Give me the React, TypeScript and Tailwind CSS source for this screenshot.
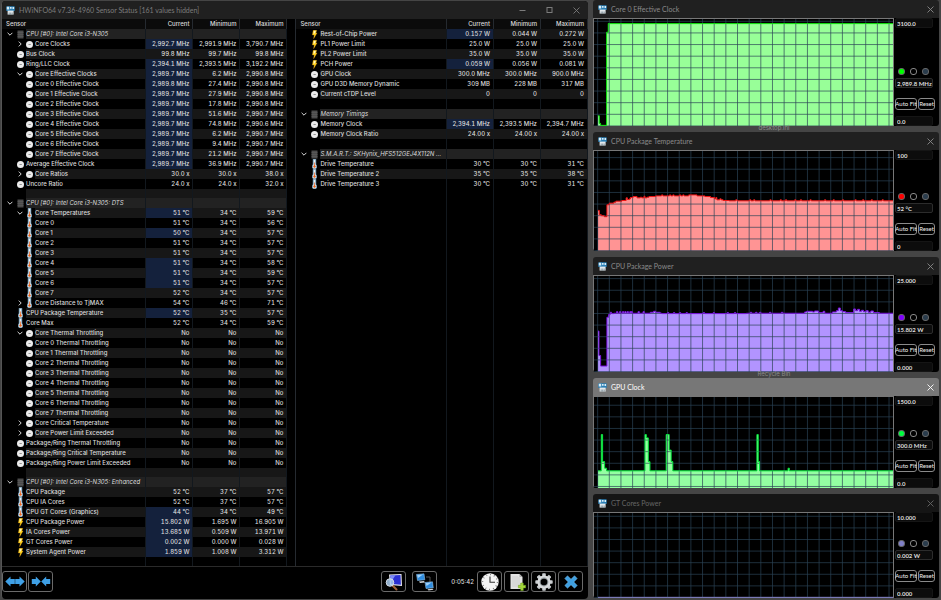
import type { ReactNode } from "react";
import { clsx } from "clsx";

type IconKind = "chip" | "clock" | "temp" | "power";

interface SensorRow {
  kind: "group" | "item" | "nested" | "gap";
  icon?: IconKind;
  label?: string;
  values?: [string, string, string];
  hot?: boolean;
  toggle?: "open" | "closed";
}

const GAP: SensorRow = { kind: "gap" };

const group = (label: string): SensorRow => ({
  kind: "group",
  icon: "chip",
  label,
  toggle: "open",
});

const item = (
  icon: IconKind,
  label: string,
  values: [string, string, string],
  hot = false,
): SensorRow => ({ kind: "item", icon, label, values, hot });

const nested = (
  icon: IconKind,
  label: string,
  values: [string, string, string],
  hot = false,
  toggle?: "open" | "closed",
): SensorRow => ({ kind: "nested", icon, label, values, hot, toggle });

const NO: [string, string, string] = ["No", "No", "No"];

const coreClocks: [string, string, string][] = [
  ["2,989.8 MHz", "27.4 MHz", "2,990.8 MHz"],
  ["2,989.7 MHz", "27.9 MHz", "2,990.8 MHz"],
  ["2,989.7 MHz", "17.8 MHz", "2,990.8 MHz"],
  ["2,989.7 MHz", "51.6 MHz", "2,990.7 MHz"],
  ["2,989.7 MHz", "74.8 MHz", "2,990.6 MHz"],
  ["2,989.7 MHz", "6.2 MHz", "2,990.7 MHz"],
  ["2,989.7 MHz", "9.4 MHz", "2,990.7 MHz"],
  ["2,989.7 MHz", "21.2 MHz", "2,990.7 MHz"],
];

const coreTemps: [number, number, number, boolean][] = [
  [51, 34, 56, false],
  [50, 34, 57, true],
  [51, 34, 57, false],
  [51, 34, 57, false],
  [51, 34, 58, true],
  [51, 34, 59, true],
  [51, 34, 57, true],
  [52, 34, 57, false],
];

const leftRows: SensorRow[] = [
  group("CPU [#0]: Intel Core i3-N305"),
  nested("clock", "Core Clocks", ["2,992.7 MHz", "2,991.9 MHz", "3,790.7 MHz"], true, "closed"),
  item("clock", "Bus Clock", ["99.8 MHz", "99.7 MHz", "99.8 MHz"]),
  item("clock", "Ring/LLC Clock", ["2,394.1 MHz", "2,393.5 MHz", "3,192.2 MHz"], true),
  nested("clock", "Core Effective Clocks", ["2,989.7 MHz", "6.2 MHz", "2,990.8 MHz"], true, "open"),
  ...coreClocks.map((v, i) => nested("clock", `Core ${i} Effective Clock`, v, true)),
  item("clock", "Average Effective Clock", ["2,989.7 MHz", "36.9 MHz", "2,990.7 MHz"], true),
  nested("clock", "Core Ratios", ["30.0 x", "30.0 x", "38.0 x"], false, "closed"),
  item("clock", "Uncore Ratio", ["24.0 x", "24.0 x", "32.0 x"]),
  GAP,
  group("CPU [#0]: Intel Core i3-N305: DTS"),
  nested("temp", "Core Temperatures", ["51 °C", "34 °C", "59 °C"], true, "open"),
  ...coreTemps.map(([cur, min, max, hot], i) =>
    nested("temp", `Core ${i}`, [`${cur} °C`, `${min} °C`, `${max} °C`], hot),
  ),
  nested("temp", "Core Distance to TjMAX", ["54 °C", "46 °C", "71 °C"], false, "closed"),
  item("temp", "CPU Package Temperature", ["52 °C", "35 °C", "57 °C"], true),
  item("temp", "Core Max", ["52 °C", "34 °C", "59 °C"]),
  nested("clock", "Core Thermal Throttling", NO, false, "open"),
  ...[0, 1, 2, 3, 4, 5, 6, 7].map((i) => nested("clock", `Core ${i} Thermal Throttling`, NO)),
  nested("clock", "Core Critical Temperature", NO, false, "closed"),
  nested("clock", "Core Power Limit Exceeded", NO, false, "closed"),
  item("clock", "Package/Ring Thermal Throttling", NO),
  item("clock", "Package/Ring Critical Temperature", NO),
  item("clock", "Package/Ring Power Limit Exceeded", NO),
  GAP,
  group("CPU [#0]: Intel Core i3-N305: Enhanced"),
  item("temp", "CPU Package", ["52 °C", "37 °C", "57 °C"]),
  item("temp", "CPU IA Cores", ["52 °C", "37 °C", "57 °C"]),
  item("temp", "CPU GT Cores (Graphics)", ["44 °C", "34 °C", "49 °C"], true),
  item("power", "CPU Package Power", ["15.802 W", "1.695 W", "16.905 W"], true),
  item("power", "IA Cores Power", ["13.685 W", "0.509 W", "13.971 W"], true),
  item("power", "GT Cores Power", ["0.002 W", "0.000 W", "0.028 W"], true),
  item("power", "System Agent Power", ["1.859 W", "1.008 W", "3.312 W"], true),
];

const rightRows: SensorRow[] = [
  item("power", "Rest-of-Chip Power", ["0.157 W", "0.044 W", "0.272 W"], true),
  item("power", "PL1 Power Limit", ["25.0 W", "25.0 W", "25.0 W"]),
  item("power", "PL2 Power Limit", ["35.0 W", "35.0 W", "35.0 W"]),
  item("power", "PCH Power", ["0.059 W", "0.056 W", "0.081 W"], true),
  item("clock", "GPU Clock", ["300.0 MHz", "300.0 MHz", "900.0 MHz"]),
  item("clock", "GPU D3D Memory Dynamic", ["309 MB", "228 MB", "317 MB"]),
  item("clock", "Current cTDP Level", ["0", "0", "0"]),
  GAP,
  group("Memory Timings"),
  item("clock", "Memory Clock", ["2,394.1 MHz", "2,393.5 MHz", "2,394.7 MHz"], true),
  item("clock", "Memory Clock Ratio", ["24.00 x", "24.00 x", "24.00 x"]),
  GAP,
  group("S.M.A.R.T.: SKHynix_HFS512GEJ4X112N ..."),
  item("temp", "Drive Temperature", ["30 °C", "30 °C", "31 °C"]),
  item("temp", "Drive Temperature 2", ["35 °C", "35 °C", "38 °C"]),
  item("temp", "Drive Temperature 3", ["30 °C", "30 °C", "31 °C"]),
];

function SensorIcon({ kind }: { kind: IconKind }) {
  if (kind === "chip") {
    return (
      <svg viewBox="0 0 7 9" className="h-[9px] w-[7px]">
        <rect x="0.5" y="0.500" width="6" height="8" fill="#4b4b4b" />
        <path d="M0.500 2.500h6M0.500 4.500h6M0.500 6.500h6" stroke="#5e5e5e" strokeWidth="0.600" />
      </svg>
    );
  }
  if (kind === "temp") {
    return (
      <svg viewBox="0 0 7 10" className="h-[10px] w-[7px]">
        <path d="M2.200 0.200h2.600v5l.7 1.400v2.400l-1 .8h-2l-1-.8V6.600l.7-1.400z" fill="#e6f1f8" stroke="#7fb0d2" strokeWidth="0.700" />
        <rect x="3" y="3.500" width="1" height="3.500" fill="#e88a5a" />
        <circle cx="3.500" cy="7.500" r="1.200" fill="#e8641c" />
      </svg>
    );
  }
  if (kind === "power") {
    return (
      <svg viewBox="0 0 7 9" className="h-[9px] w-[7px]">
        <path d="M2.200 0.200h3.600L4.900 3h1.200L2.600 8.800 3.200 5H1.300z" fill="#ffd21e" stroke="#c98a12" strokeWidth="0.300" />
        <path d="M2.800 0.800h2L3.900 3.200 2.600 4z" fill="#fff6c2" />
      </svg>
    );
  }
  return (
    <svg viewBox="0 0 7 7" className="size-[7px]">
      <circle cx="3.500" cy="3.500" r="3.500" fill="#ececec" />
      <path d="M2.500 3.500H4.800" stroke="#8a8a8a" strokeWidth="0.900" fill="none" />
    </svg>
  );
}

function Toggle({ state, label }: { state: "open" | "closed"; label: string }) {
  return (
    <button type="button" aria-label={label} aria-expanded={state === "open"} className="flex">
      <svg viewBox="0 0 6 6" className="size-[6px]" fill="none" stroke="#d8d8d8">
        <path d={state === "open" ? "M0.600 1.800 3 4.200 5.400 1.800" : "M1.800 0.600 4.200 3 1.800 5.400"} />
      </svg>
    </button>
  );
}

interface SensorTableProps {
  rows: SensorRow[];
  label: string;
  tightGaps?: boolean;
}

function SensorTable({ rows, label, tightGaps }: SensorTableProps) {
  return (
    <table
      aria-label={label}
      className="h-full w-full table-fixed border-collapse font-medium text-[#dcdcdc]"
    >
      <thead>
        <tr className="h-[10px] bg-[#0b0b0b]">
          <th className="border-r border-[#252a30] p-0 pl-1 text-left font-medium">Sensor</th>
          {["Current", "Minimum", "Maximum"].map((h) => (
            <th key={h} className="w-[47px] border-r border-[#252a30] p-0 pr-[3px] text-right font-medium">
              {h}
            </th>
          ))}
        </tr>
      </thead>
      <tbody>
        {rows.map((row, i) => {
          const shade =
            row.kind === "group" ? "bg-[#222222]" : i % 2 === 0 ? "bg-[#171717]" : "bg-black";
          const height = row.kind === "gap" && tightGaps ? "h-[9px]" : "h-[10px]";
          return (
            <tr key={i} className={height}>
              <td className="border-r border-[#12181e] p-0">
                <div className={clsx("flex items-center", height)}>
                  <span className="flex w-[15px] shrink-0 justify-center">
                    {row.kind === "group" && <Toggle state="open" label={row.label ?? ""} />}
                  </span>
                  <span className="flex w-[9px] shrink-0">
                    {row.kind === "nested"
                      ? row.toggle && <Toggle state={row.toggle} label={row.label ?? ""} />
                      : row.icon && <SensorIcon kind={row.icon} />}
                  </span>
                  {row.kind === "nested" && row.icon && (
                    <span className="flex w-[9px] shrink-0">
                      <SensorIcon kind={row.icon} />
                    </span>
                  )}
                  <span
                    className={clsx(
                      "h-full min-w-0 flex-1 whitespace-nowrap",
                      row.kind === "group" && "font-normal italic",
                      shade,
                    )}
                  >
                    {row.label}
                  </span>
                </div>
              </td>
              {[0, 1, 2].map((c) => (
                <td
                  key={c}
                  className={clsx(
                    "border-r border-[#12181e] p-0 pr-[3px] text-right whitespace-nowrap tabular-nums",
                    c === 0 && row.hot ? "bg-[#14213c]" : shade,
                  )}
                >
                  {row.values?.[c]}
                </td>
              ))}
            </tr>
          );
        })}
        <tr>
          {[0, 1, 2, 3].map((c) => (
            <td key={c} className="border-r border-[#12181e] p-0">
              <div className="h-[9px]" />
            </td>
          ))}
        </tr>
      </tbody>
    </table>
  );
}

function AppIcon() {
  return (
    <svg viewBox="0 0 9 9" className="size-[9px] shrink-0">
      <rect x="0.300" y="0.300" width="8.400" height="4.700" rx="0.600" fill="#2a7fb5" />
      <path d="M0.800 0.800h2.400v2.700H0.800zM4 0.900h1.600v1.800H4zM6.500 0.900h1.600v2.200H6.500z" fill="#d9edf7" />
      <rect x="1.600" y="4.600" width="6" height="4" fill="#e4e9ec" />
      <path d="M3.200 6.500v2.100M4.700 6.500v2.100M6.200 6.500v2.100" stroke="#4f6672" strokeWidth="0.600" />
    </svg>
  );
}

function CloseIcon() {
  return (
    <svg viewBox="0 0 7 7" className="size-[7px]" fill="none" stroke="currentColor" strokeWidth="0.900">
      <path d="M0.500 0.500l6 6M6.500 0.500l-6 6" />
    </svg>
  );
}

// Graph samples are [x, level] steps: x runs over 903 units, level counts up
// from the bottom edge in the same unit.
type Sample = [number, number];

interface Graph {
  title: string;
  max: string;
  min: string;
  value: string;
  height: string;
  units: number;
  gridTop: number;
  line: string;
  fill: string;
  swatch: string;
  samples: Sample[];
  tone: "idle" | "active" | "faded";
  below?: string;
}

// Small regular bumps on top of a flat level
function ripple(from: number, to: number, level: number, bumps: number[], height = 3): Sample[] {
  const out: Sample[] = [[from, level]];
  for (const b of bumps) {
    if (b > from && b < to) out.push([b, level + height], [b + 4, level]);
  }
  return out;
}

const graphs: Graph[] = [
  {
    title: "Core 0 Effective Clock",
    max: "3100.0",
    min: "0.0",
    value: "2,989.8 MHz",
    height: "h-[108px]",
    units: 324,
    gridTop: 7,
    line: "#0be00b",
    fill: "#98ff98",
    swatch: "bg-[#00ff00]",
    samples: [[12, 31], [16, 8], [20, 2], [38, 284], [43, 310]],
    tone: "idle",
    below: "desktop.ini",
  },
  {
    title: "CPU Package Temperature",
    max: "100",
    min: "0",
    value: "52 °C",
    height: "h-[101px]",
    units: 303,
    gridTop: 20,
    line: "#f01414",
    fill: "#ff9494",
    swatch: "bg-[#ff0000]",
    samples: [
      [12, 123], [16, 110], [22, 107], [31, 104], [39, 140], [46, 145], [60, 148], [66, 151],
      [84, 153], [97, 161], [101, 156], [107, 158], [110, 162], [118, 165], [130, 161],
      [140, 163], [144, 161], [151, 166], [154, 161], [160, 163], [166, 165],
      ...ripple(186, 284, 167, [204, 228, 238, 258, 268]),
      [286, 170], [311, 167], [335, 165], [352, 162], [364, 158], [368, 162], [371, 155],
      [380, 158], [384, 155], [390, 153],
      ...ripple(408, 894, 152, [428, 470, 482, 531, 562, 578, 606, 623, 652, 696, 722, 750, 788, 811, 837, 870, 898]),
    ],
    tone: "idle",
  },
  {
    title: "CPU Package Power",
    max: "25.000",
    min: "0.000",
    value: "15.802 W",
    height: "h-[97px]",
    units: 291,
    gridTop: 8,
    line: "#7a12e0",
    fill: "#b294ff",
    swatch: "bg-[#8000ff]",
    samples: [
      [12, 124], [15, 50], [20, 18], [39, 166], [44, 174], [49, 181], [53, 177],
      ...ripple(60, 165, 178, [68, 77, 86, 93, 100, 108, 112, 133, 148], 5),
      [170, 181], [180, 184], [186, 181], [200, 178],
      ...ripple(205, 450, 177, [222, 240, 258, 278, 330, 360, 402, 424]),
      ...ripple(460, 632, 178, [472, 488, 500, 530, 566]),
      [636, 182], [642, 184], [660, 182], [666, 185], [678, 180], [692, 184], [697, 178],
      [720, 182], [732, 186], [738, 194], [744, 186], [750, 183], [760, 180], [774, 180],
      [784, 191], [790, 186], [796, 190], [802, 184], [808, 187], [814, 183],
      [822, 186], [828, 181], [836, 185], [844, 180], [862, 178],
    ],
    tone: "idle",
    below: "Recycle Bin",
  },
  {
    title: "GPU Clock",
    max: "1500.0",
    min: "0.0",
    value: "300.0 MHz",
    height: "h-[92px]",
    units: 276,
    gridTop: 25,
    line: "#00e63a",
    fill: "#94ffa2",
    swatch: "bg-[#00ff40]",
    samples: [
      [12, 52], [22, 162], [26, 80], [32, 60], [38, 52],
      [154, 162], [158, 152], [164, 80], [169, 52],
      [218, 162], [227, 115], [233, 80], [238, 52],
      [492, 162], [496, 80], [500, 52], [586, 60], [590, 52],
    ],
    tone: "active",
  },
  {
    title: "GT Cores Power",
    max: "10.000",
    min: "0.000",
    value: "0.002 W",
    height: "h-[86px]",
    units: 258,
    gridTop: 10,
    line: "#8884c8",
    fill: "#8884c8",
    swatch: "bg-[#8080c8]",
    samples: [[12, 2]],
    tone: "faded",
  },
];

function Plot({ graph }: { graph: Graph }) {
  const { units, samples } = graph;
  let steps = `M${samples[0][0]} ${units - samples[0][1]}`;
  for (const [x, level] of samples.slice(1)) {
    steps += `H${x}V${units - level}`;
  }
  steps += "H903";

  let grid = "";
  for (let x = 11; x < 903; x += 35.2) grid += `M${x} 0V${units}`;
  for (let y = graph.gridTop; y < units; y += 35.2) grid += `M0 ${y}H903`;

  return (
    <svg
      viewBox={`0 0 903 ${units}`}
      preserveAspectRatio="none"
      className="min-w-0 flex-1 border-t border-r border-l border-[#777] bg-black"
      role="img"
      aria-label={graph.title}
    >
      <path d={`${steps}V${units}H${samples[0][0]}Z`} fill={graph.fill} />
      <path d={grid} fill="none" stroke="#2a4355" strokeOpacity="0.700" strokeWidth="3" />
      <path d={steps} fill="none" stroke={graph.line} strokeWidth="3" />
    </svg>
  );
}

function Field({ label, value, outlined }: { label: string; value: string; outlined?: boolean }) {
  return (
    <input
      aria-label={label}
      defaultValue={value}
      className={clsx(
        "h-[10px] w-[38px] shrink-0 rounded-[2px] border bg-[#0c0c0c] pl-px leading-[8px]",
        outlined ? "border-[#2c2c2c]" : "border-[#151515]",
      )}
    />
  );
}

function GraphWindow({ graph }: { graph: Graph }) {
  return (
    <section className="overflow-hidden rounded-[3px]">
      <header
        className={clsx(
          "flex h-[18px] items-center gap-1 px-[5px] font-['Lato',sans-serif] text-[7px]",
          graph.tone === "idle" && "bg-[#202020] text-[#8a8a8a]",
          graph.tone === "active" && "bg-[#777777] text-white",
          graph.tone === "faded" && "bg-[#151515] text-[#666666]",
        )}
      >
        <AppIcon />
        <h2 className="flex-1">{graph.title}</h2>
        <button type="button" aria-label={`Close ${graph.title}`}>
          <CloseIcon />
        </button>
      </header>
      <div className={clsx("flex bg-black", graph.height)}>
        <Plot graph={graph} />
        <div className="flex w-[45px] shrink-0 flex-col pl-px font-['Lato',sans-serif] text-[6px] font-bold text-[#dcdcdc]">
          <Field label="Graph maximum" value={graph.max} />
          <div className="mt-auto flex gap-[5px] pl-[3px]">
            <button type="button" aria-label="Line colour" className={clsx("size-[7px] rounded-[3px] border border-[#666]", graph.swatch)} />
            <button type="button" aria-label="Background colour" className="size-[7px] rounded-[3px] border border-[#888] bg-black" />
            <button type="button" aria-label="Grid colour" className="size-[7px] rounded-[3px] border border-[#666] bg-[#2a3c4c]" />
          </div>
          <div className="mt-[3px] flex">
            <Field label="Current value" value={graph.value} outlined />
          </div>
          <div className="mt-[10px] mb-[6px] flex gap-px leading-[10px] font-normal text-[#f0f0f0]">
            <button type="button" className="flex h-3 w-[22px] justify-center rounded-[3px] border border-[#8a8a8a] whitespace-nowrap">
              Auto Fit
            </button>
            <button type="button" className="flex h-3 w-[17px] justify-center rounded-[3px] border border-[#8a8a8a]">
              Reset
            </button>
          </div>
          <Field label="Graph minimum" value={graph.min} />
        </div>
      </div>
    </section>
  );
}

function ToolButton({ label, children }: { label: string; children: ReactNode }) {
  return (
    <button
      type="button"
      aria-label={label}
      className="flex h-[21px] w-[25px] items-center justify-center rounded-[3px] border border-[#6a6a6a] bg-black"
    >
      {children}
    </button>
  );
}

function Toolbar() {
  return (
    <footer className="flex items-center border-t border-[#2a2a2a] pt-1 pr-[5px] pb-[7px]">
      <div className="flex gap-px">
        <ToolButton label="Expand columns">
          <svg viewBox="0 0 20 11" className="h-[11px] w-[20px] shrink-0" fill="#3fa0e6">
            <path d="M0.300 5.500 5.500 0.500v2.400h4.300v5.200H5.500v2.400zM19.700 5.500 14.500 0.500v2.400h-4.300v5.200h4.300v2.400z" />
          </svg>
        </ToolButton>
        <ToolButton label="Shrink columns">
          <svg viewBox="0 0 20 11" className="h-[11px] w-[20px] shrink-0" fill="#3fa0e6">
            <path d="M9.800 5.500 4.800 0.500v2.400H0.800v5.200h4v2.400zM10.200 5.500 15.200 0.500v2.400h4v5.200h-4v2.400z" />
          </svg>
        </ToolButton>
      </div>
      <div className="ml-auto flex items-center gap-[6px]">
        <ToolButton label="System summary">
          <svg viewBox="0 0 18 18" className="size-[18px]">
            <path d="M4 1.500 16.500 1l.5 12L5 12z" fill="#e8e8ee" />
            <path d="M5.200 2.500 15.500 2l.4 9.800L6 11z" fill="#2a2fd0" />
            <path d="M5.200 2.500 10.500 2.200 6 9z" fill="#7d8af5" />
            <path d="M7.500 12.500 11.500 16.500" stroke="#a06038" strokeWidth="2" strokeLinecap="round" />
            <circle cx="5" cy="9.500" r="3.800" fill="#a9cdf0" fillOpacity="0.850" stroke="#d5dde5" strokeWidth="1" />
          </svg>
        </ToolButton>
        <ToolButton label="Remote sensors">
          <svg viewBox="0 0 18 18" className="size-[18px]">
            <path d="M10 4h4v5" stroke="#555" fill="none" />
            <path d="M0.500 1.500 8 0.800l.8 6L1.500 7.500z" fill="#2f8de0" stroke="#a9d2f2" strokeWidth="0.500" />
            <path d="M3 8.500 8 8l1 1.500-5 .5z" fill="#d0d4d8" />
            <path d="M1.200 2 7 1.500 2 5z" fill="#9fd0f8" />
            <path d="M9 9.500l7.500-.700.8 6-7.300.700z" fill="#2f8de0" stroke="#a9d2f2" strokeWidth="0.500" />
            <path d="M11.500 16.300l5-.5 1 1-5 .7z" fill="#d0d4d8" />
            <path d="M9.700 10l5.800-.5-5 3.500z" fill="#9fd0f8" />
          </svg>
        </ToolButton>
      </div>
      <time className="mr-[3px] ml-[14px] font-medium whitespace-nowrap text-[#dcdcdc]">0:05:42</time>
      <div className="flex items-center gap-[2px]">
        <ToolButton label="Reset clock">
          <svg viewBox="0 0 18 18" className="size-[18px]">
            <circle cx="9" cy="9" r="8.700" fill="#f4f4f4" />
            <circle cx="9" cy="9" r="7.400" fill="none" stroke="#555" strokeWidth="1.400" strokeDasharray="0.700 3.174" />
            <path d="M9 3.500V9.200h5" stroke="#333" strokeWidth="1.100" fill="none" />
          </svg>
        </ToolButton>
        <ToolButton label="Start logging">
          <svg viewBox="0 0 18 18" className="size-[18px]">
            <path d="M2.500 1h9l3 3v12h-12z" fill="#e2e2e2" />
            <path d="M5 3v11M7 3v11M9 3v11M11 4v10" stroke="#c6c6c6" strokeWidth="0.700" />
            <path d="M11.500 1l3 3h-3z" fill="#aaa" />
            <path d="M12.700 10h2.600v2.300h2.300v2.600h-2.300v2.600h-2.600v-2.600h-2.300v-2.600h2.300z" fill="#a4d63c" stroke="#6d9c1c" strokeWidth="0.500" />
          </svg>
        </ToolButton>
        <ToolButton label="Settings">
          <svg viewBox="0 0 18 18" className="size-[18px]">
            {[0, 45, 90, 135].map((a) => (
              <rect key={a} x="7.200" y="0.300" width="3.600" height="17.400" rx="0.800" fill="#c9cdd0" transform={`rotate(${a} 9 9)`} />
            ))}
            <circle cx="9" cy="9" r="6.600" fill="#d9dcde" />
            <circle cx="9" cy="9" r="4.400" fill="#8d9498" />
            <circle cx="9" cy="9" r="3.300" fill="#000" />
          </svg>
        </ToolButton>
        <ToolButton label="Close sensors">
          <svg viewBox="0 0 14 14" className="size-[14px]">
            <path d="M3.500 0.800 7 4.200 10.500 0.800 13.200 3.500 9.800 7l3.400 3.500-2.700 2.700L7 9.800l-3.500 3.400L0.800 10.500 4.200 7 0.800 3.500z" fill="#3f9fe0" stroke="#7fc0ee" strokeWidth="0.500" />
          </svg>
        </ToolButton>
      </div>
    </footer>
  );
}

export default function App() {
  return (
    <main className="grid min-h-screen grid-cols-[590fr_351fr] bg-[#454545] font-['Inter',sans-serif] text-[6px] leading-[10px]">
      <section className="mt-px mr-[2px] ml-px flex flex-col self-start overflow-hidden rounded-[4px] border-l border-[#555] bg-black">
        <header className="flex h-[18px] items-center gap-1 bg-[#202020] pr-[8px] pl-[4px] font-['Lato',sans-serif] text-[7px] text-[#7c7c7c]">
          <AppIcon />
          <h1 className="flex-1">HWiNFO64 v7.36-4960 Sensor Status [161 values hidden]</h1>
          <div className="flex items-center gap-[20px]">
            <button type="button" aria-label="Minimize">
              <svg viewBox="0 0 7 7" className="size-[7px]" stroke="currentColor">
                <path d="M0.500 3.500h6" />
              </svg>
            </button>
            <button type="button" aria-label="Maximize">
              <svg viewBox="0 0 7 7" className="size-[7px]" fill="none" stroke="currentColor">
                <rect x="1" y="0.500" width="5" height="5" />
              </svg>
            </button>
            <button type="button" aria-label="Close">
              <CloseIcon />
            </button>
          </div>
        </header>
        <div className="grid grid-cols-[285fr_292fr] gap-x-[8px]">
          <SensorTable rows={leftRows} label="Processor sensors" tightGaps />
          <div className="border-l border-[#252a30]">
            <SensorTable rows={rightRows} label="Power, memory and drive sensors" />
          </div>
        </div>
        <Toolbar />
      </section>

      <div className="mr-[2px] ml-[3px] flex flex-col">
        {graphs.map((graph, i) => (
          <div key={graph.title}>
            <GraphWindow graph={graph} />
            {i < graphs.length - 1 && (
              <p className="h-[6px] pl-[16px] text-center leading-[4px] text-[#8c8c8c]">{graph.below}</p>
            )}
          </div>
        ))}
      </div>
    </main>
  );
}
